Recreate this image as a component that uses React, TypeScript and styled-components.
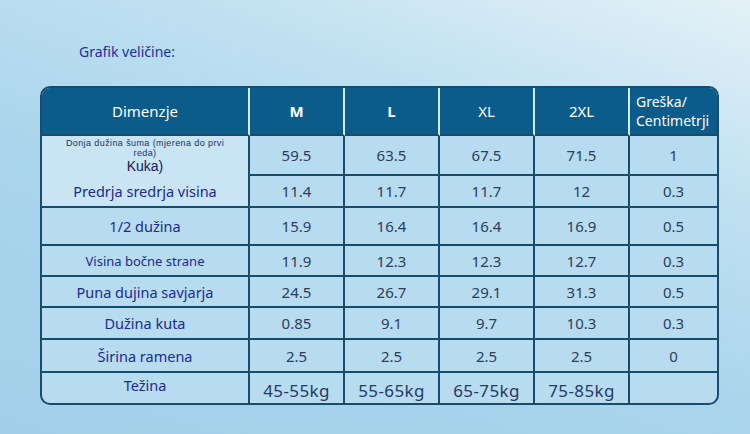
import React from 'react';
import styled, {createGlobalStyle} from 'styled-components';

// size chart data
const sizes = ['M', 'L', 'XL', '2XL'];

const rows = [
    {label: 'Predrja sredrja visina', values: ['11.4', '11.7', '11.7', '12'], error: '0.3'},
    {label: '1/2 dužina', values: ['15.9', '16.4', '16.4', '16.9'], error: '0.5'},
    {label: 'Visina bočne strane', values: ['11.9', '12.3', '12.3', '12.7'], error: '0.3', small: true},
    {label: 'Puna dujina savjarja', values: ['24.5', '26.7', '29.1', '31.3'], error: '0.5'},
    {label: 'Dužina kuta', values: ['0.85', '9.1', '9.7', '10.3'], error: '0.3'},
    {label: 'Širina ramena', values: ['2.5', '2.5', '2.5', '2.5'], error: '0'}
];

const weights = ['45-55kg', '55-65kg', '65-75kg', '75-85kg'];

const GlobalStyle = createGlobalStyle`
  html, body {
    margin: 0;
    padding: 0;
  }
  body {
    font-family: "Noto Sans", "Open Sans", sans-serif;
  }
`;

const App: React.FC = () => {
    return (
        <Page>
            <GlobalStyle/>
            <Title>Grafik veličine:</Title>
            <Table>
                <HeadCell>Dimenzje</HeadCell>
                {sizes.map((s) => (
                    <HeadCell key={s} bold={s === 'M' || s === 'L'}>{s}</HeadCell>
                ))}
                <HeadCell last left>Greška/<br/>Centimetrji</HeadCell>

                {/* first row has the odd two-size label */}
                <LabelCell patch noBottom>
                    <Tiny>Donja dužina šuma (mjerena do prvi</Tiny>
                    <Tiny>reda)</Tiny>
                    <Kuka>Kuka)</Kuka>
                </LabelCell>
                {['59.5', '63.5', '67.5', '71.5'].map((v, i) => (
                    <ValueCell key={i}>{v}</ValueCell>
                ))}
                <ValueCell last>1</ValueCell>

                {rows.map((row, ri) => (
                    <React.Fragment key={row.label}>
                        <LabelCell patch={ri === 0} small={row.small}>{row.label}</LabelCell>
                        {row.values.map((v, i) => (
                            <ValueCell key={i}>{v}</ValueCell>
                        ))}
                        <ValueCell last>{row.error}</ValueCell>
                    </React.Fragment>
                ))}

                <LabelCell noBottom raised>Težina</LabelCell>
                {weights.map((w) => (
                    <WeightCell key={w}>{w}</WeightCell>
                ))}
                <ValueCell last noBottom/>
            </Table>
        </Page>
    );
};

export default App;

// styled-components

const Page = styled.div`
  width: 750px;
  height: 434px;
  box-sizing: border-box;
  padding: 42px 0 0 40px;
  background: linear-gradient(200deg, #e4f1f7 0%, #bfe0f1 30%, #a9d4ec 60%, #a3cfea 100%);
  overflow: hidden;
`;

const Title = styled.div`
  margin-left: 39px;
  font-size: 14px;
  color: #1c2f9c;
  height: 44px;
  line-height: 20px;
`;

const Table = styled.div`
  width: 679px;
  box-sizing: border-box;
  display: grid;
  grid-template-columns: 208px 95px 95px 95px 95px 87px;
  grid-template-rows: 48px 40px 32px 38px 31px 31px 32px 33px 30px;
  border: 2px solid #174c6c;
  border-radius: 10px;
  overflow: hidden;
  background: #b7dcef;
`;

const HeadCell = styled.div<{bold?: boolean; last?: boolean; left?: boolean}>`
  background: #0b5b8b;
  color: #fff;
  display: flex;
  align-items: center;
  justify-content: ${(p) => (p.left ? 'flex-start' : 'center')};
  padding-left: ${(p) => (p.left ? '6px' : '0')};
  font-size: ${(p) => (p.left ? '14px' : '15px')};
  line-height: 19px;
  font-weight: ${(p) => (p.bold ? 700 : 400)};
  border-right: ${(p) => (p.last ? 'none' : '2px solid #cdeef6')};
  border-bottom: 2px solid #174c6c;
  box-sizing: border-box;
`;

const LabelCell = styled.div<{patch?: boolean; noBottom?: boolean; small?: boolean; raised?: boolean}>`
  display: flex;
  flex-direction: column;
  align-items: center;
  justify-content: center;
  padding-bottom: ${(p) => (p.raised ? '6px' : '0')};
  color: #1b2a8f;
  font-size: ${(p) => (p.small ? '13px' : '14.5px')};
  background: ${(p) => (p.patch ? '#c9e4f2' : 'transparent')};
  border-right: 2px solid #174c6c;
  border-bottom: ${(p) => (p.noBottom ? 'none' : '2px solid #174c6c')};
  box-sizing: border-box;
`;

const Tiny = styled.span`
  font-family: "Liberation Sans", Arial, sans-serif;
  font-size: 9px;
  letter-spacing: 0.4px;
  line-height: normal;
  color: #22306e;
`;

const Kuka = styled.span`
  font-family: "Liberation Sans", Arial, sans-serif;
  font-size: 14px;
  line-height: normal;
  color: #18205a;
`;

const ValueCell = styled.div<{last?: boolean; noBottom?: boolean}>`
  display: flex;
  align-items: center;
  justify-content: center;
  color: #2c3d5e;
  font-size: 15px;
  border-right: ${(p) => (p.last ? 'none' : '2px solid #174c6c')};
  border-bottom: ${(p) => (p.noBottom ? 'none' : '2px solid #174c6c')};
  box-sizing: border-box;
`;

const WeightCell = styled.div`
  display: flex;
  align-items: center;
  justify-content: center;
  padding-top: 4px;
  color: #263a64;
  font-size: 17px;
  letter-spacing: 0.4px;
  border-right: 2px solid #174c6c;
  box-sizing: border-box;
`;
